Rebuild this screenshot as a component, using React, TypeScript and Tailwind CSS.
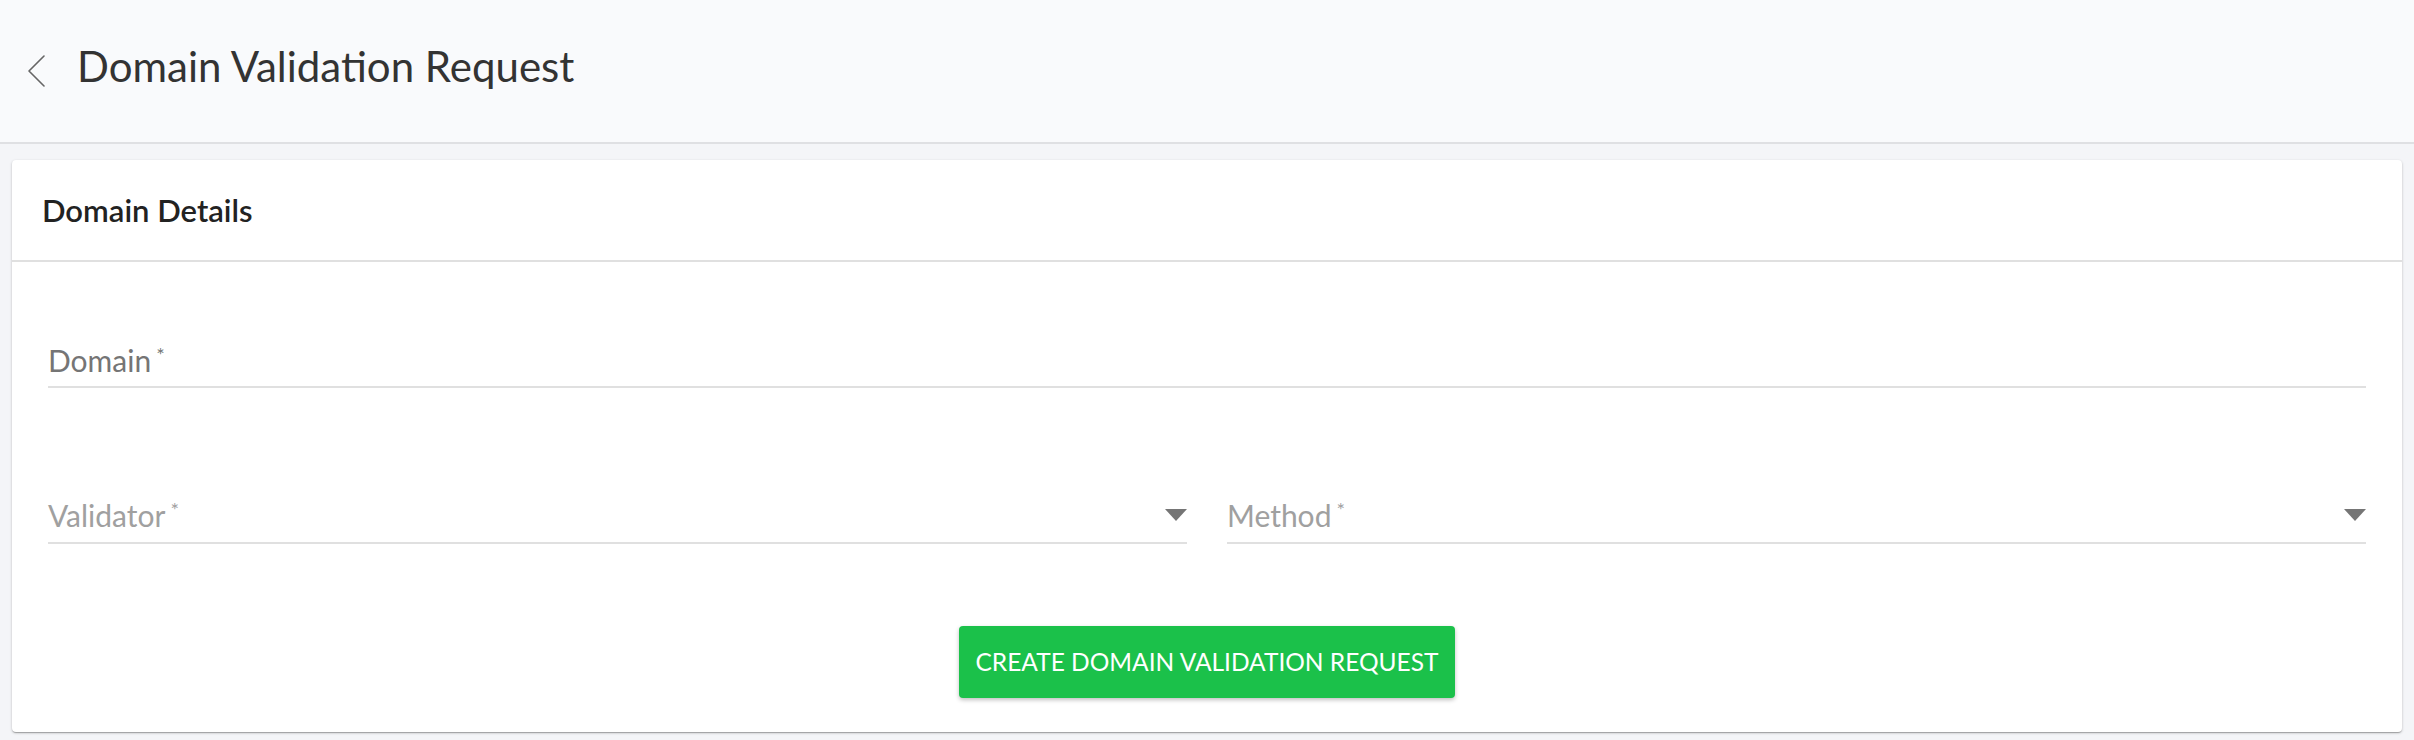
import React from 'react';

const FONT = 'font-["Lato","Liberation_Sans",sans-serif]';

function Caret() {
  return (
    <svg width="22" height="12" viewBox="0 0 22 12" className="shrink-0 text-[#757575]">
      <polygon points="0,0 22,0 11,12" fill="currentColor" />
    </svg>
  );
}

function Required() {
  return <span className="ml-[5px] align-top text-[20px] leading-[24px]">*</span>;
}

function SelectField({ label }: { label: string }) {
  return (
    <div className="flex items-center justify-between border-b-2 border-[#e0e0e0] pb-[9px]">
      <span className="text-[30px] leading-[36px] text-[#a0a0a0]">
        {label}
        <Required />
      </span>
      <Caret />
    </div>
  );
}

export default function App() {
  return (
    <div className={`min-h-screen bg-[#f4f5f8] ${FONT}`}>
      {/* Page header */}
      <div className="flex h-[144px] items-center border-b-2 border-[#dfe0e3] bg-[#f9fafc]">
        <svg width="20" height="32" viewBox="0 0 20 32" fill="none" stroke="currentColor" strokeWidth="1.6" strokeLinecap="round" strokeLinejoin="round" className="ml-[27px] shrink-0 text-[#666666]">
          <polyline points="17,1 2,16 17,31" />
        </svg>
        <h1 className="ml-[30px] pb-[10px] text-[42px] font-normal leading-[48px] text-[#333333]">
          Domain Validation Request
        </h1>
      </div>

      {/* Card */}
      <div className="mx-[12px] mt-[16px] rounded-[4px] bg-white shadow-[0_1px_3px_rgba(0,0,0,0.2),0_1px_1px_rgba(0,0,0,0.14),0_2px_1px_-1px_rgba(0,0,0,0.12)]">
        <div className="flex h-[102px] items-center border-b-2 border-[#e0e0e0] pl-[30px]">
          <h2 className="text-[31px] font-semibold leading-[36px] text-[#222222]">Domain Details</h2>
        </div>

        <div className="px-[36px] pb-[34px]">
          <div className="mt-[80px] border-b-2 border-[#e0e0e0] pb-[8px]">
            <span className="text-[30px] leading-[36px] text-[#757575]">
              Domain
              <Required />
            </span>
          </div>

          <div className="mt-[109px] grid grid-cols-2 gap-[40px]">
            <SelectField label="Validator" />
            <SelectField label="Method" />
          </div>

          <div className="mt-[82px] flex justify-center">
            <button
              type="button"
              className="h-[72px] rounded-[4px] bg-[#1bc14a] px-[16px] text-[24.5px] uppercase leading-none text-white shadow-[0_2px_4px_rgba(0,0,0,0.25)]"
            >
              Create Domain Validation Request
            </button>
          </div>
        </div>
      </div>
    </div>
  );
}
